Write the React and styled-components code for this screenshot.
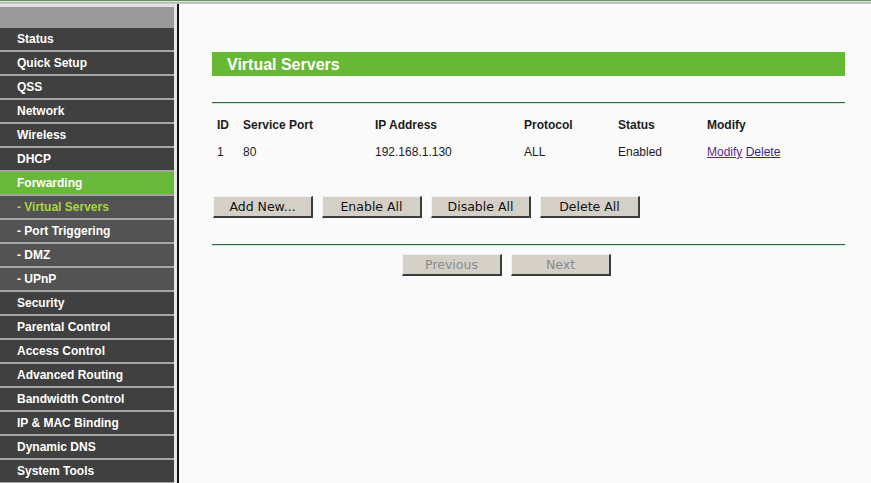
import styled, { createGlobalStyle } from "styled-components";

const Global = createGlobalStyle`
  html, body {
    margin: 0;
    padding: 0;
    background: #fafafa;
  }
  body {
    font-family: "Liberation Sans", Arial, Helvetica, sans-serif;
  }
`;

const Page = styled.div`
  width: 871px;
  height: 483px;
  overflow: hidden;
  display: flex;
  flex-direction: column;
  background: #fafafa;
`;

const TopStrip = styled.div`
  height: 1px;
  background: #6f8f6f;
  border-bottom: 1px solid #d4ead0;
  box-shadow: 0 1px 0 #b8b8b8, 0 2px 0 #c8c8c8;
  position: relative;
  z-index: 1;
`;

const Body = styled.div`
  flex: 1;
  display: flex;
  min-height: 0;
`;

const Sidebar = styled.nav`
  width: 174px;
  flex-shrink: 0;
  display: flex;
  flex-direction: column;
  background: #e2e2e2;
  padding-top: 5px;
`;

const SideHead = styled.div`
  height: 21px;
  flex-shrink: 0;
  background: #9a9a9a;
`;

const MenuItem = styled.div`
  height: 22px;
  flex-shrink: 0;
  line-height: 22px;
  border-bottom: 2px solid #a4a4a4;
  padding-left: 17px;
  font-size: 12px;
  font-weight: bold;
  color: ${(p) => (p.current ? "#a8d83c" : "#ffffff")};
  background: ${(p) => (p.active ? "#69b83a" : p.sub ? "#535353" : "#404040")};
  white-space: nowrap;
`;

const Divider = styled.div`
  width: 3px;
  flex-shrink: 0;
  background: #e6e6e6;
  border-right: 2px solid #151515;
`;

const Main = styled.main`
  flex: 1;
  padding: 50px 26px 0 33px;
  background: #fafafa;
`;

const TitleBar = styled.h1`
  margin: 0;
  height: 24px;
  line-height: 25px;
  padding-left: 15px;
  background: #67b935;
  color: #ffffff;
  font-size: 16px;
  font-weight: bold;
`;

const Rule = styled.div`
  height: 1px;
  background: #2e6a44;
  border-bottom: 1px solid #c8eadb;
  margin-top: ${(p) => p.top}px;
`;

const Table = styled.div`
  margin-top: 8px;
  display: grid;
  grid-template-columns: 26px 132px 149px 94px 89px 1fr;
  padding-left: 5px;
  font-size: 12px;
  color: #1c1c1c;
`;

const Cell = styled.div`
  height: 27px;
  line-height: 27px;
  font-weight: ${(p) => (p.head ? "bold" : "normal")};
  white-space: nowrap;
`;

const Link = styled.a`
  color: ${(p) => (p.visited ? "#5a2b8c" : "#34287e")};
  text-decoration: underline;
  cursor: pointer;
`;

const ButtonRow = styled.div`
  display: flex;
  gap: 9px;
  margin-top: ${(p) => p.top}px;
  padding-left: ${(p) => p.indent || 1}px;
`;

const Button = styled.button`
  width: 100px;
  height: 22px;
  padding: 0;
  box-sizing: border-box;
  background: #d4d0c8;
  border: none;
  border-top: 1px solid #f2f2f2;
  border-left: 1px solid #f2f2f2;
  border-right: 2px solid #3c3c3c;
  border-bottom: 2px solid #3c3c3c;
  font-family: "DejaVu Sans", Tahoma, Verdana, sans-serif;
  font-size: 12.5px;
  color: ${(p) => (p.disabled ? "#8a8a8a" : "#111111")};
`;

const menu = [
  { label: "Status" },
  { label: "Quick Setup" },
  { label: "QSS" },
  { label: "Network" },
  { label: "Wireless" },
  { label: "DHCP" },
  { label: "Forwarding", active: true },
  { label: "- Virtual Servers", sub: true, current: true },
  { label: "- Port Triggering", sub: true },
  { label: "- DMZ", sub: true },
  { label: "- UPnP", sub: true },
  { label: "Security" },
  { label: "Parental Control" },
  { label: "Access Control" },
  { label: "Advanced Routing" },
  { label: "Bandwidth Control" },
  { label: "IP & MAC Binding" },
  { label: "Dynamic DNS" },
  { label: "System Tools" },
];

const headers = ["ID", "Service Port", "IP Address", "Protocol", "Status", "Modify"];

export default function App() {
  return (
    <Page>
      <Global />
      <TopStrip />
      <Body>
        <Sidebar>
          <SideHead />
          {menu.map((m) => (
            <MenuItem key={m.label} active={m.active} sub={m.sub} current={m.current}>
              {m.label}
            </MenuItem>
          ))}
        </Sidebar>
        <Divider />
        <Main>
          <TitleBar>Virtual Servers</TitleBar>
          <Rule top={26} />
          <Table>
            {headers.map((h) => (
              <Cell head key={h}>
                {h}
              </Cell>
            ))}
            <Cell>1</Cell>
            <Cell>80</Cell>
            <Cell>192.168.1.130</Cell>
            <Cell>ALL</Cell>
            <Cell>Enabled</Cell>
            <Cell>
              <Link visited>Modify</Link> <Link>Delete</Link>
            </Cell>
          </Table>
          <ButtonRow top={30}>
            <Button>Add New...</Button>
            <Button>Enable All</Button>
            <Button>Disable All</Button>
            <Button>Delete All</Button>
          </ButtonRow>
          <Rule top={26} />
          <ButtonRow top={8} indent={190}>
            <Button disabled>Previous</Button>
            <Button disabled>Next</Button>
          </ButtonRow>
        </Main>
      </Body>
    </Page>
  );
}
